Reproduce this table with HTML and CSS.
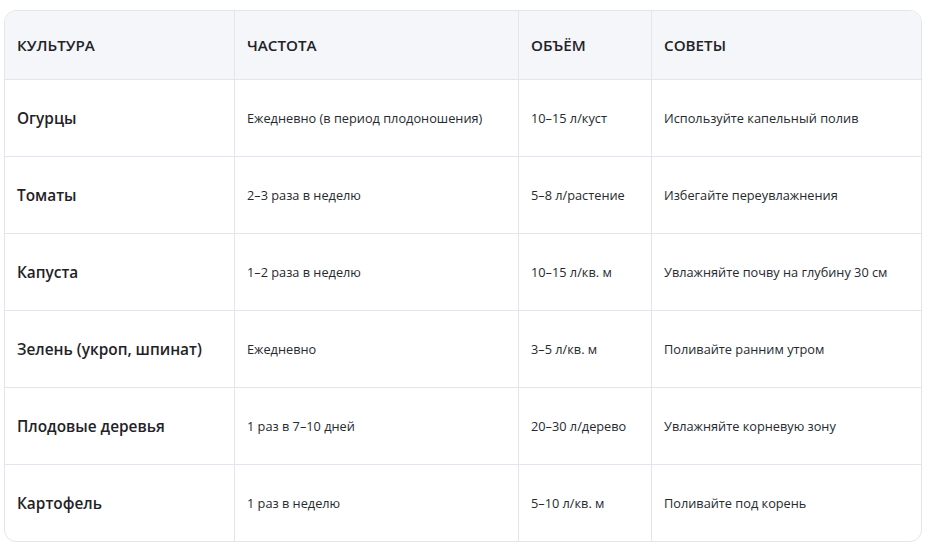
FILE: index.html
```html
<!DOCTYPE html>
<html lang="ru">
<head>
<meta charset="utf-8">
<link rel="stylesheet" href="styles.css">
</head>
<body>
<div class="page">
  <div class="card">
    <table class="grid">
      <colgroup>
        <col class="c1"><col class="c2"><col class="c3"><col class="c4">
      </colgroup>
      <thead>
        <tr><th>КУЛЬТУРА</th><th>ЧАСТОТА</th><th>ОБЪЁМ</th><th>СОВЕТЫ</th></tr>
      </thead>
      <tbody>
        <tr><td class="name">Огурцы</td><td>Ежедневно (в период плодоношения)</td><td>10–15 л/куст</td><td>Используйте капельный полив</td></tr>
        <tr><td class="name">Томаты</td><td>2–3 раза в неделю</td><td>5–8 л/растение</td><td>Избегайте переувлажнения</td></tr>
        <tr><td class="name">Капуста</td><td>1–2 раза в неделю</td><td>10–15 л/кв. м</td><td>Увлажняйте почву на глубину 30 см</td></tr>
        <tr><td class="name">Зелень (укроп, шпинат)</td><td>Ежедневно</td><td>3–5 л/кв. м</td><td>Поливайте ранним утром</td></tr>
        <tr><td class="name">Плодовые деревья</td><td>1 раз в 7–10 дней</td><td>20–30 л/дерево</td><td>Увлажняйте корневую зону</td></tr>
        <tr><td class="name">Картофель</td><td>1 раз в неделю</td><td>5–10 л/кв. м</td><td>Поливайте под корень</td></tr>
      </tbody>
    </table>
  </div>
</div>
</body>
</html>
```
FILE: styles.css
```css
html, body {
  margin: 0;
  padding: 0;
  background: #ffffff;
}
.page {
  padding: 10px 11px 0 4px;
  font-family: "Open Sans", "Noto Sans", sans-serif;
  color: #1f2328;
}
.card {
  border: 1px solid #e3e5ea;
  border-radius: 12px;
  overflow: hidden;
  width: 916px;
}
.grid {
  border-collapse: separate;
  border-spacing: 0;
  table-layout: fixed;
  width: 916px;
}
.c1 { width: 230px; }
.c2 { width: 284px; }
.c3 { width: 133px; }
.c4 { width: 269px; }
th, td {
  text-align: left;
  vertical-align: middle;
  padding: 0 12px;
  border-right: 1px solid #e3e5ea;
  border-bottom: 1px solid #e3e5ea;
}
th:last-child, td:last-child { border-right: none; }
tbody tr:last-child td { border-bottom: none; }
th {
  height: 68px;
  background: #f5f6fa;
  font-size: 15.2px;
  font-weight: 600;
}
td {
  height: 76px;
  font-size: 12.75px;
  font-weight: 400;
  color: #26292e;
}
td.name {
  font-size: 15.4px;
  font-weight: 600;
  color: #1f2328;
}
```
